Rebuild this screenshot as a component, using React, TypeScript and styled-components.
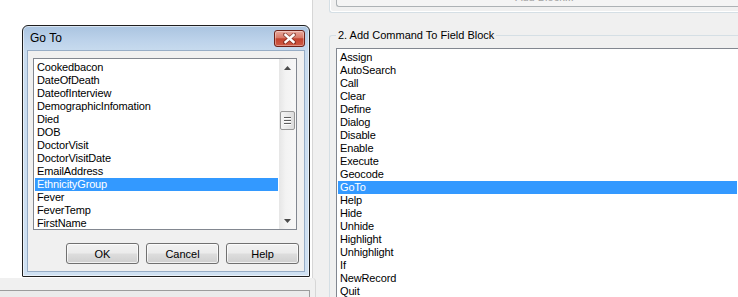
import React from "react";
import styled, { createGlobalStyle } from "styled-components";

const GlobalStyle = createGlobalStyle`
  html, body {
    margin: 0;
    padding: 0;
    background: #f0f0f0;
  }
  body {
    font-family: "Liberation Sans", Arial, sans-serif;
    font-size: 11px;
    color: #000;
  }
`;

const Screen = styled.div`
  width: 738px;
  height: 297px;
  overflow: hidden;
  display: grid;
  grid-template-columns: 316px 1fr;
  background: #f0f0f0;
`;

/* ---------- left side: white canvas with the modal dialog ---------- */

const LeftColumn = styled.div`
  display: flex;
  flex-direction: column;
  min-height: 0;
`;

const WhitePane = styled.div`
  box-sizing: border-box;
  width: 313px;
  height: 278px;
  flex-shrink: 0;
  background: #fff;
  border-right: 1px solid #d6d6d6;
  padding: 25px 0 0 22px;
`;

const BottomPane = styled.div`
  flex: 1;
  border-right: 1px solid #d6d6d6;
  border-top-right-radius: 4px;
`;

const BottomBox = styled.div`
  width: 310px;
  height: 20px;
  margin-top: 12px;
  box-sizing: border-box;
  border-top: 1px solid #9c9c9c;
  border-right: 1px solid #9c9c9c;
  background: #ebebeb;
`;

const Frame = styled.div`
  box-sizing: border-box;
  width: 288px;
  height: 252px;
  border: 1px solid #1f1f1f;
  border-radius: 6px 6px 1px 1px;
  padding: 0 4px 4px 4px;
  display: flex;
  flex-direction: column;
  background: linear-gradient(180deg, #aac4e0 0px, #bcd2ea 14px, #c9dcef 26px, #d0e1f2 100%);
  box-shadow: inset 0 0 0 1px rgba(255, 255, 255, 0.55);
`;

const TitleBar = styled.div`
  height: 24px;
  flex-shrink: 0;
  display: flex;
  align-items: flex-start;
  justify-content: space-between;
  padding-left: 3px;
`;

const Title = styled.span`
  margin-top: 5px;
  font-family: "Liberation Sans", Arial, sans-serif;
  font-size: 12px;
  line-height: 15px;
  color: #000;
`;

const CloseButton = styled.div`
  box-sizing: border-box;
  width: 31px;
  height: 17px;
  margin-top: 4px;
  border: 1px solid #6e2118;
  border-radius: 3px;
  display: flex;
  align-items: center;
  justify-content: center;
  background: linear-gradient(180deg, #e9aa9e 0%, #d87a69 45%, #c3432f 52%, #cf5b46 100%);
  box-shadow: inset 0 0 0 1px rgba(255, 255, 255, 0.35);
`;

const Client = styled.div`
  flex: 1;
  box-sizing: border-box;
  border: 1px solid #97adc6;
  background: #f0f0f0;
  padding: 7px 5px 0 5px;
  display: flex;
  flex-direction: column;
`;

const DialogList = styled.div`
  box-sizing: border-box;
  width: 264px;
  height: 172px;
  border: 1px solid #828790;
  background: #fff;
  display: flex;
  overflow: hidden;
`;

const Items = styled.div<{ $top: number }>`
  flex: 1;
  padding: ${(p) => p.$top}px 1px 0 1px;
  overflow: hidden;
`;

const Item = styled.div<{ $selected?: boolean }>`
  height: 13px;
  line-height: 13px;
  padding-left: 2px;
  white-space: nowrap;
  letter-spacing: -0.15px;
  background: ${(p) => (p.$selected ? "#3399ff" : "transparent")};
  color: ${(p) => (p.$selected ? "#fff" : "#000")};
`;

const ScrollBar = styled.div`
  width: 17px;
  flex-shrink: 0;
  display: flex;
  flex-direction: column;
  background: linear-gradient(90deg, #e6e6e6 0%, #f3f3f3 40%, #f7f7f7 100%);
`;

const ArrowCell = styled.div`
  height: 17px;
  flex-shrink: 0;
  display: flex;
  align-items: center;
  justify-content: center;
`;

const Track = styled.div`
  flex: 1;
  display: flex;
  flex-direction: column;
`;

const Thumb = styled.div<{ $offset: number }>`
  box-sizing: border-box;
  width: 15px;
  height: 19px;
  margin-left: 1px;
  margin-top: ${(p) => p.$offset}px;
  border: 1px solid #979797;
  border-radius: 2px;
  background: linear-gradient(90deg, #f4f4f4 0%, #e9e9e9 50%, #dcdcdc 100%);
  display: flex;
  flex-direction: column;
  align-items: center;
  justify-content: center;
  gap: 1px;
`;

const Grip = styled.span`
  width: 7px;
  height: 1px;
  background: #5d5d5d;
  box-shadow: 0 1px 0 #fff;
  margin-bottom: 1px;
`;

const ButtonRow = styled.div`
  display: flex;
  justify-content: flex-end;
  gap: 7px;
  margin-top: 13px;
`;

const PushButton = styled.div`
  box-sizing: border-box;
  width: 73px;
  height: 21px;
  border: 1px solid #707070;
  border-radius: 3px;
  display: flex;
  align-items: center;
  justify-content: center;
  font-size: 11px;
  color: #000;
  background: linear-gradient(180deg, #f2f2f2 0%, #ebebeb 48%, #dddddd 52%, #cfcfcf 100%);
  box-shadow: inset 0 0 0 1px rgba(255, 255, 255, 0.7);
`;

/* ---------- right side: command groups ---------- */

const RightColumn = styled.div`
  padding-left: 13px;
  display: flex;
  flex-direction: column;
  min-width: 0;
`;

const TopGroup = styled.div`
  height: 12px;
  flex-shrink: 0;
  border-left: 1px solid #d5dfe5;
  border-bottom: 1px solid #d5dfe5;
  border-bottom-left-radius: 3px;
  padding-left: 6px;
  box-shadow: inset 1px -1px 0 #fff;
`;

const GhostButton = styled.div`
  box-sizing: border-box;
  width: 416px;
  height: 7px;
  border-left: 1px solid #adb2b5;
  border-bottom: 1px solid #adb2b5;
  border-bottom-left-radius: 3px;
  background: #f4f4f4;
  display: flex;
  align-items: flex-end;
  justify-content: center;
  overflow: hidden;
  color: #a3a3a3;
  span {
    line-height: 11px;
    margin-bottom: 3px;
  }
`;

const Group = styled.fieldset`
  margin: 16px 0 0 0;
  padding: 6px 0 0 6px;
  border: 1px solid #d5dfe5;
  border-right: none;
  border-bottom: none;
  border-top-left-radius: 3px;
  min-width: 0;
  flex: 1;
`;

const Legend = styled.legend`
  padding: 0 2px;
  font-size: 11px;
  line-height: 13px;
  color: #000;
`;

const CommandList = styled.div`
  border: 1px solid #828790;
  border-right: none;
  border-bottom: none;
  background: #fff;
  height: 260px;
  overflow: hidden;
`;

const fields = [
  "Cookedbacon",
  "DateOfDeath",
  "DateofInterview",
  "DemographicInfomation",
  "Died",
  "DOB",
  "DoctorVisit",
  "DoctorVisitDate",
  "EmailAddress",
  "EthnicityGroup",
  "Fever",
  "FeverTemp",
  "FirstName",
];

const commands = [
  "Assign",
  "AutoSearch",
  "Call",
  "Clear",
  "Define",
  "Dialog",
  "Disable",
  "Enable",
  "Execute",
  "Geocode",
  "GoTo",
  "Help",
  "Hide",
  "Unhide",
  "Highlight",
  "Unhighlight",
  "If",
  "NewRecord",
  "Quit",
];

const CloseIcon = () => (
  <svg width="13" height="11" viewBox="0 0 13 11">
    <path
      d="M2 1.5 L11 9.5 M11 1.5 L2 9.5"
      stroke="#5a1a12"
      strokeWidth="4"
      strokeLinecap="square"
      opacity="0.55"
    />
    <path d="M2.5 2 L10.5 9 M10.5 2 L2.5 9" stroke="#fff" strokeWidth="2.4" strokeLinecap="square" />
  </svg>
);

const Arrow = ({ down }: { down?: boolean }) => (
  <svg width="7" height="4" viewBox="0 0 7 4">
    <path d={down ? "M0 0 H7 L3.5 4 Z" : "M0 4 H7 L3.5 0 Z"} fill="#4a4a4a" />
  </svg>
);

export default function App() {
  const selectedField = "EthnicityGroup";
  const selectedCommand = "GoTo";

  return (
    <>
      <GlobalStyle />
      <Screen>
        <LeftColumn>
          <WhitePane>
            <Frame>
              <TitleBar>
                <Title>Go To</Title>
                <CloseButton>
                  <CloseIcon />
                </CloseButton>
              </TitleBar>
              <Client>
                <DialogList>
                  <Items $top={2}>
                    {fields.map((f) => (
                      <Item key={f} $selected={f === selectedField}>
                        {f}
                      </Item>
                    ))}
                  </Items>
                  <ScrollBar>
                    <ArrowCell>
                      <Arrow />
                    </ArrowCell>
                    <Track>
                      <Thumb $offset={35}>
                        <Grip />
                        <Grip />
                        <Grip />
                      </Thumb>
                    </Track>
                    <ArrowCell>
                      <Arrow down />
                    </ArrowCell>
                  </ScrollBar>
                </DialogList>
                <ButtonRow>
                  <PushButton>OK</PushButton>
                  <PushButton>Cancel</PushButton>
                  <PushButton>Help</PushButton>
                </ButtonRow>
              </Client>
            </Frame>
          </WhitePane>
          <BottomPane>
            <BottomBox />
          </BottomPane>
        </LeftColumn>

        <RightColumn>
          <TopGroup>
            <GhostButton>
              <span>Add Block...</span>
            </GhostButton>
          </TopGroup>
          <Group>
            <Legend>2. Add Command To Field Block</Legend>
            <CommandList>
              <Items $top={2}>
                {commands.map((c) => (
                  <Item key={c} $selected={c === selectedCommand}>
                    {c}
                  </Item>
                ))}
              </Items>
            </CommandList>
          </Group>
        </RightColumn>
      </Screen>
    </>
  );
}
